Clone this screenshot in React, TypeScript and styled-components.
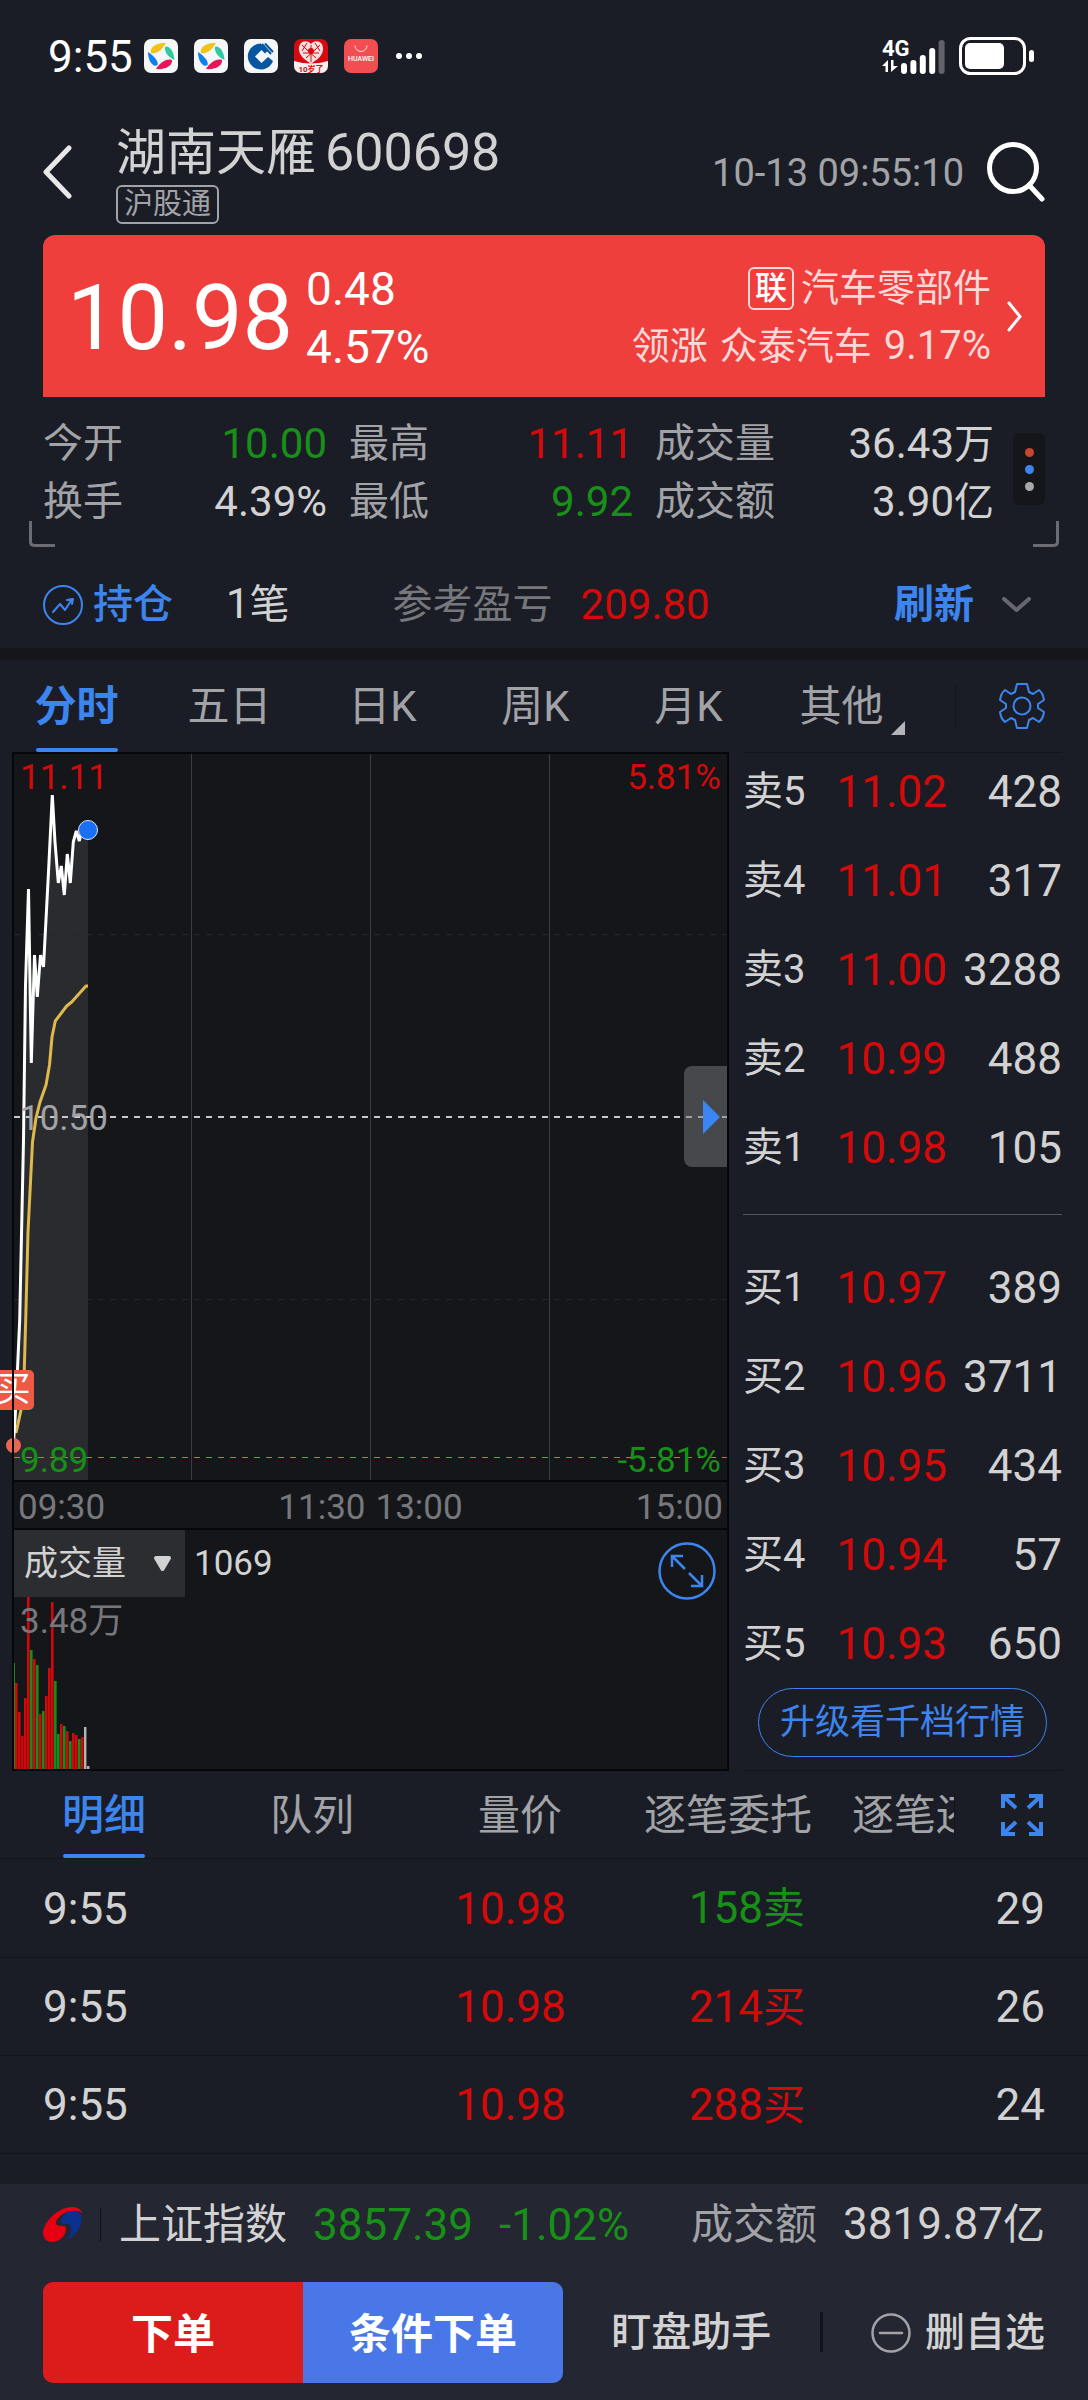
import React from "react";
import styled, { createGlobalStyle, css } from "styled-components";

const c = {
  page: "#1b1d26",
  panel: "#15161a",
  line: "#14151b",
  frame: "#06070b",
  text: "#d2d2d2",
  muted: "#a2a3a6",
  dim: "#77787b",
  blue: "#3d85ee",
  red: "#d40a0a",
  green: "#189018",
};

const Global = createGlobalStyle`
  * { box-sizing: border-box; }
  body {
    margin: 0;
    background: ${c.page};
    color: ${c.text};
    font-family: Roboto, "Noto Sans CJK SC", sans-serif;
    overflow-x: hidden;
  }
  button, select { font: inherit; color: inherit; background: none; border: 0; padding: 0; margin: 0; cursor: pointer; }
  h1, p, dl, dt, dd { margin: 0; font-weight: 400; }
  svg { display: block; flex: none; }
`;

type Tone = "text" | "muted" | "dim" | "blue" | "red" | "green";

const Page = styled.main`
  background: ${c.page};
  overflow: hidden;
`;

const Num = styled.span<{ $tone?: Tone; $large?: boolean }>`
  font-size: ${(p) => (p.$large ? 44 : 42)}px;
  line-height: 58px;
  white-space: nowrap;
  color: ${(p) => c[p.$tone ?? "text"]};
`;

const Unit = styled.span`
  font-size: 40px;
`;

const Large = styled.span`
  font-size: 42px;
`;

const Label = styled.span<{ $tone?: Tone; $bold?: boolean }>`
  font-size: 40px;
  line-height: 58px;
  white-space: nowrap;
  font-weight: ${(p) => (p.$bold ? 500 : 400)};
  color: ${(p) => c[p.$tone ?? "muted"]};
`;

/* ---------- status bar ---------- */

const StatusBar = styled.header`
  height: 112px;
  padding: 0 54px 0 48px;
  display: flex;
  align-items: center;
  justify-content: space-between;
`;

const StatusGroup = styled.div<{ $gap: number }>`
  display: flex;
  align-items: center;
  gap: ${(p) => p.$gap}px;
`;

const Clock = styled.span`
  font-size: 44px;
  line-height: 52px;
  padding-top: 2px;
  color: #fff;
  width: 80px;
`;

const PetalApp = () => (
  <svg width="34" height="34" viewBox="0 0 34 34" aria-hidden="true">
    <rect width="34" height="34" rx="7" fill="#f5f6f8" />
    <path d="M7 14C5 9 12 3 22 4C19 9 15 14 9 14.500Z" fill="#efc417" />
    <path d="M21 8C24 6 30 11 30.500 21C25 19 20 13 21 8Z" fill="#2fcaa0" />
    <path d="M28 21C29 26 22 31 12 30C15 25 22 19 28 21Z" fill="#ea1558" />
    <path d="M4 13C9 16 15 22 13.500 26C9 29 4 22 4 13Z" fill="#0d80f0" />
  </svg>
);

const BankApp = () => (
  <svg width="34" height="34" viewBox="0 0 34 34" aria-hidden="true">
    <rect width="34" height="34" rx="7" fill="#f5f6f8" />
    <path d="M17 4.500A13 13 0 1 0 29 22L24 18L17.500 24L11 17.500L17.500 11L21 14.500L24 11.500L17 5Z" fill="#0657a0" />
    <path d="M18 5L27 15M21 4.500L29 13" stroke="#0657a0" strokeWidth="2" />
  </svg>
);

const HeartApp = () => (
  <svg width="34" height="34" viewBox="0 0 34 34" aria-hidden="true">
    <rect width="34" height="34" rx="7" fill="#d70a12" />
    <path d="M0 22Q17 27 34 22V27A7 7 0 0 1 27 34H7A7 7 0 0 1 0 27Z" fill="#f7eeee" />
    <path d="M17 5C13 0 4 2 5 11C6 18 12 21 17 25C22 21 28 18 29 11C30 2 21 0 17 5Z" fill="#f7dede" />
    <path d="M8 6l5 5M13 4l-5 8M26 6l-5 5M21 4l5 8M17 6v17M9 14h16M12 19l10-9M22 19l-10-9" stroke="#d70a12" strokeWidth="1" />
    <circle cx="17" cy="12" r="3" fill="#d70a12" />
    <text x="17" y="33" textAnchor="middle" fontSize="8" fontWeight="700" fill="#d70a12">10岁了</text>
  </svg>
);

const StoreApp = () => (
  <svg width="34" height="34" viewBox="0 0 34 34" aria-hidden="true">
    <rect width="34" height="34" rx="7" fill="#f24e52" />
    <path d="M11 6.500A6 6 0 0 0 23 6.500" fill="none" stroke="#fde3e3" strokeWidth="1" />
    <text x="17" y="22" textAnchor="middle" fontSize="7" fontWeight="500" fill="#fff">HUAWEI</text>
  </svg>
);

const More = () => (
  <svg width="28" height="8" viewBox="0 0 28 8" fill="#fff" aria-hidden="true">
    <circle cx="5" cy="4" r="3" />
    <circle cx="15" cy="4" r="3" />
    <circle cx="25" cy="4" r="3" />
  </svg>
);

const Network = styled.div`
  display: flex;
  align-items: flex-end;
`;

const NetworkKind = styled.div`
  width: 19px;
  height: 36px;
  color: #fff;
  font-size: 22px;
  font-weight: 700;
  line-height: 22px;
  white-space: nowrap;
`;

const bars = [11, 14, 19, 26, 34];

const Signal = () => (
  <Network>
    <NetworkKind>
      4G
      <svg width="16" height="12" viewBox="0 0 16 12" fill="#fff" aria-hidden="true">
        <path d="M6 0V12H3.500V6H0ZM9 12V0H11.500V6H16Z" />
      </svg>
    </NetworkKind>
    <svg width="44" height="34" viewBox="0 0 44 34" aria-hidden="true">
      {bars.map((h, i) => (
        <rect key={h} x={i * 9.4} y={34 - h} width="6" height={h} rx="3" fill={i === 4 ? "#62636a" : "#fff"} />
      ))}
    </svg>
  </Network>
);

const Battery = () => (
  <svg width="75" height="38" viewBox="0 0 75 38" aria-hidden="true">
    <rect x="1.500" y="1.500" width="64" height="35" rx="10" fill="none" stroke="#fff" strokeWidth="3" />
    <rect x="6" y="6" width="39" height="26" rx="5" fill="#fff" />
    <rect x="70" y="13" width="5" height="12" rx="2.500" fill="#fff" />
  </svg>
);

/* ---------- title ---------- */

const TitleBar = styled.div`
  height: 123px;
  padding: 0 43px 4px;
  display: flex;
  align-items: center;
`;

const TitleBlock = styled.div`
  margin-left: 44px;
  margin-right: auto;
  padding-top: 7px;
  display: flex;
  flex-direction: column;
  align-items: flex-start;
  gap: 5px;
`;

const Title = styled.h1`
  display: flex;
  gap: 9px;
  font-size: 50px;
  line-height: 54px;
  white-space: nowrap;
`;

const Code = styled.span`
  font-size: 52px;
`;

const MarketTag = styled.span`
  height: 39px;
  padding: 0 6px;
  border: 2px solid ${c.muted};
  border-radius: 6px;
  font-size: 29px;
  line-height: 35px;
  color: ${c.muted};
`;

const Stamp = styled.time`
  font-size: 38px;
  line-height: 44px;
  padding-top: 3px;
  color: ${c.muted};
  margin-right: 22px;
  white-space: nowrap;
`;

/* ---------- quote card ---------- */

const Quote = styled.section`
  margin: 0 43px;
  height: 162px;
  padding: 0 23px 0 24px;
  display: flex;
  align-items: center;
  background: #ee3f3d;
  border-radius: 12px 12px 0 0;
  color: #fff;
`;

const Price = styled.strong`
  padding-top: 6px;
  font-size: 90px;
  line-height: 100px;
  font-weight: 400;
`;

const Change = styled.div`
  margin-left: 13px;
  padding-top: 3px;
  display: flex;
  flex-direction: column;
  font-size: 46px;
  line-height: 58px;
`;

const Sector = styled.button`
  margin-left: auto;
  display: flex;
  align-items: center;
  gap: 16px;
  text-align: right;
`;

const SectorText = styled.span`
  padding-top: 2px;
  display: flex;
  flex-direction: column;
  align-items: flex-end;
  font-size: 38px;
  line-height: 58px;
  color: #fcd9d8;
  white-space: nowrap;
`;

const SectorLine = styled.span<{ $gap: number }>`
  display: flex;
  align-items: center;
  gap: ${(p) => p.$gap}px;
`;

const LeaderChange = styled.span`
  font-size: 40px;
`;

const LinkTag = styled.span`
  width: 46px;
  height: 43px;
  border: 2px solid #fcd9d8;
  border-radius: 6px;
  font-size: 32px;
  line-height: 38px;
  font-weight: 500;
  text-align: center;
  color: #fff;
`;

/* ---------- stats ---------- */

const Stats = styled.section`
  position: relative;
  height: 151px;
  padding: 18px 43px 0;
  display: flex;
  gap: 19px;
`;

const StatGrid = styled.dl`
  flex: 1;
  display: grid;
  grid-template-columns: 284fr 284fr 339fr;
  grid-auto-rows: 58px;
  column-gap: 22px;
`;

const Stat = styled.div`
  display: flex;
  justify-content: space-between;
`;

const DotsButton = styled.button`
  width: 32px;
  height: 72px;
  margin-top: 18px;
  border-radius: 6px;
  background: ${c.panel};
  display: flex;
  flex-direction: column;
  align-items: center;
  justify-content: center;
  gap: 8px;
`;

const Dot = styled.span<{ $color: string }>`
  width: 9px;
  height: 9px;
  border-radius: 50%;
  background: ${(p) => p.$color};
`;

const Corner = styled.span<{ $side: "left" | "right" }>`
  position: absolute;
  bottom: 1px;
  ${(p) => p.$side}: 29px;
  width: 26px;
  height: 26px;
  border-bottom: 3px solid #6c6d72;
  ${(p) => css`border-${p.$side}: 3px solid #6c6d72;`}
  ${(p) => (p.$side === "left" ? "border-bottom-left-radius: 5px;" : "border-bottom-right-radius: 5px;")}
`;

/* ---------- holding ---------- */

const Holding = styled.section`
  height: 100px;
  padding: 13px 57px 0 43px;
  display: flex;
  align-items: center;
  gap: 28px;
`;

const HoldingButton = styled.button`
  display: flex;
  align-items: center;
  gap: 10px;
  margin-right: 25px;
`;

const HoldingCount = styled(Num)`
  margin-right: 75px;
`;

const Refresh = styled.button`
  margin-left: auto;
  font-size: 40px;
  line-height: 58px;
  font-weight: 700;
  color: ${c.blue};
`;

const Band = styled.div`
  height: 12px;
  background: ${c.panel};
`;

/* ---------- tabs ---------- */

const ChartTabs = styled.nav`
  height: 92px;
  display: grid;
  grid-template-columns: 918fr 170fr;
`;

const TabGroup = styled.div`
  display: flex;
  overflow: hidden;
`;

const Tab = styled.button<{ $active?: boolean; $width?: number; $bold?: boolean }>`
  position: relative;
  flex: ${(p) => (p.$width ? `0 0 ${p.$width}px` : "1 1 0")};
  padding-top: 2px;
  font-size: 42px;
  line-height: 56px;
  white-space: nowrap;
  font-weight: ${(p) => (p.$bold ? 700 : p.$active ? 500 : 400)};
  color: ${(p) => (p.$active ? c.blue : c.muted)};
  ${(p) =>
    p.$active &&
    css`
      &::after {
        content: "";
        position: absolute;
        left: 50%;
        bottom: 0;
        width: 82px;
        height: 4px;
        margin-left: -41px;
        border-radius: 2px;
        background: ${c.blue};
      }
    `}
`;

const TabMark = styled.svg`
  position: absolute;
  right: 13px;
  bottom: 17px;
`;

const TabTools = styled.div`
  display: flex;
  align-items: center;
  justify-content: space-between;
  padding: 0 42px 0 37px;
`;

const ToolDivider = styled.span<{ $height: number; $width?: number }>`
  flex: none;
  width: ${(p) => p.$width ?? 1}px;
  height: ${(p) => p.$height}px;
  background: ${c.line};
`;

/* ---------- chart ---------- */

const Market = styled.section`
  display: grid;
  grid-template-columns: minmax(0, 1fr) 319px;
  column-gap: 14px;
  padding: 0 26px 0 12px;
`;

const ChartColumn = styled.div`
  background: ${c.panel};
  min-width: 0;
`;

const Framed = styled.div<{ $height: number }>`
  position: relative;
  height: ${(p) => p.$height}px;
  &::after {
    content: "";
    position: absolute;
    inset: 0;
    border: 2px solid ${c.frame};
    z-index: 2;
    pointer-events: none;
  }
`;

const Plot = styled.svg`
  width: 100%;
  height: 100%;
`;

const AxisLabel = styled.span<{ $tone: Tone; $top: number; $side?: "left" | "right" }>`
  position: absolute;
  top: ${(p) => p.$top}px;
  ${(p) => p.$side ?? "left"}: 8px;
  font-size: 35px;
  line-height: 42px;
  white-space: nowrap;
  color: ${(p) => c[p.$tone]};
`;

const BuyMark = styled.span`
  position: absolute;
  left: -19px;
  top: 618px;
  width: 41px;
  height: 40px;
  border-radius: 5px;
  background: #ee5a45;
  color: #fff;
  font-size: 34px;
  line-height: 38px;
  text-align: center;
`;

const BuyPoint = styled.span`
  position: absolute;
  left: -6px;
  top: 686px;
  width: 15px;
  height: 15px;
  border-radius: 50%;
  background: #e86654;
`;

const Drawer = styled.button`
  position: absolute;
  right: 1px;
  top: 314px;
  width: 44px;
  height: 101px;
  border-radius: 8px 0 0 8px;
  background: rgba(120, 121, 124, 0.5);
  display: flex;
  align-items: center;
  justify-content: flex-end;
  padding-right: 8px;
`;

const TimeAxis = styled.div`
  height: 46px;
  padding: 2px 4px 0;
  border: solid ${c.frame};
  border-width: 0 2px;
  display: grid;
  grid-template-columns: 1fr auto auto 1fr;
  column-gap: 10px;
  font-size: 35px;
  line-height: 48px;
  color: ${c.dim};
  & > :last-child { text-align: right; }
`;

const VolumeBar = styled.div`
  position: absolute;
  left: 2px;
  top: 2px;
  right: 13px;
  display: flex;
  align-items: flex-start;
`;

const SelectBox = styled.label`
  display: flex;
  align-items: center;
  width: 171px;
  height: 67px;
  background: #2c2d31;
  padding-right: 13px;
`;

const Select = styled.select`
  flex: 1;
  min-width: 0;
  height: 67px;
  padding-left: 10px;
  appearance: none;
  font-size: 34px;
  line-height: 67px;
`;

const VolumeValue = styled.span`
  margin-left: 9px;
  font-size: 35px;
  line-height: 68px;
`;

const ExpandButton = styled.button`
  margin: 12px 0 0 auto;
`;

const volumes: Array<[string, number]> = [
  ["r", 86], ["r", 57], ["r", 33], ["r", 71], ["r", 172], ["g", 119], ["r", 110], ["g", 104],
  ["r", 55], ["g", 58], ["r", 73], ["r", 101], ["r", 167], ["g", 88], ["g", 35], ["r", 45],
  ["g", 43], ["r", 38], ["g", 28], ["r", 36], ["r", 34], ["g", 30], ["r", 32], ["w", 42], ["w", 3],
];
const volumeFill: Record<string, [string, string]> = {
  r: ["#8f0a0c", "#cf0a0a"],
  g: ["#14601a", "#178c1a"],
  w: ["#55565a", "#b4b4b6"],
};

const priceLine =
  "1.500,690 3,668 5.500,617 7.700,568 11.500,388 13.500,233 16.500,137 19.300,311 22.500,203 25.300,245 28.500,203 31.500,215 36.500,120 40.300,43 43,90 46.300,131 49.300,114 52.300,143 55.300,102 58.300,131 61.300,90 64.300,79 67.300,89 70,78 76,78";
const averageLine =
  "4,681 9,658 12.300,617 13.700,568 16,480 20.500,390 24,366 28,350 34,333 37.500,313 40,285 43.300,269 54.700,254 59.700,250 74,234 76,234";

/* ---------- order book ---------- */

const Book = styled.aside`
  height: 1019px;
  padding-top: 17px;
  border-top: 1px solid ${c.line};
  border-bottom: 1px solid ${c.line};
`;

const BookTable = styled.table`
  display: block;
`;

const BookBody = styled.tbody`
  display: grid;
  row-gap: 45px;
`;

const BookRow = styled.tr`
  display: grid;
  grid-template-columns: 70px 134px 1fr;
  height: 44px;
`;

const BookCell = styled.td<{ $tone?: Tone }>`
  padding: 0;
  font-size: 44px;
  line-height: 44px;
  text-align: right;
  color: ${(p) => c[p.$tone ?? "text"]};
`;

const BookHead = styled.th`
  padding: 0;
  font-size: 40px;
  line-height: 44px;
  font-weight: 400;
  text-align: left;
  white-space: nowrap;
`;

const BookRule = styled.hr`
  height: 1px;
  margin: 44px 0 51px;
  border: 0;
  background: #55565c;
`;

const Upgrade = styled.button`
  display: block;
  width: 289px;
  height: 69px;
  margin: 22px auto 0;
  border: 1px solid ${c.blue};
  border-radius: 35px;
  font-size: 35px;
  line-height: 66px;
  color: ${c.blue};
`;

const asks = [["卖5", "11.02", "428"], ["卖4", "11.01", "317"], ["卖3", "11.00", "3288"], ["卖2", "10.99", "488"], ["卖1", "10.98", "105"]];
const bids = [["买1", "10.97", "389"], ["买2", "10.96", "3711"], ["买3", "10.95", "434"], ["买4", "10.94", "57"], ["买5", "10.93", "650"]];

const Orders = ({ rows, label }: { rows: string[][]; label: string }) => (
  <BookTable aria-label={label}>
    <BookBody>
      {rows.map(([name, price, size]) => (
        <BookRow key={name}>
          <BookHead scope="row">{name}</BookHead>
          <BookCell $tone="red">{price}</BookCell>
          <BookCell>{size}</BookCell>
        </BookRow>
      ))}
    </BookBody>
  </BookTable>
);

/* ---------- trades ---------- */

const TradeTabs = styled.nav`
  height: 88px;
  border-bottom: 1px solid ${c.line};
  display: flex;
  align-items: stretch;
  & > ${TabGroup} { flex: 1; }
`;

const TradeTools = styled.div`
  display: flex;
  align-items: center;
  gap: 46px;
  padding-right: 45px;
`;

const Trades = styled.table`
  width: 100%;
  table-layout: fixed;
  border-collapse: collapse;
  margin-bottom: 30px;
`;

const TradeRow = styled.tr`
  height: 98px;
  border-bottom: 1px solid ${c.line};
`;

const TradeCell = styled.td<{ $tone?: Tone; $width: string }>`
  width: ${(p) => p.$width};
  padding: 2px 0 0;
  font-size: 44px;
  line-height: 58px;
  text-align: right;
  white-space: nowrap;
  color: ${(p) => c[p.$tone ?? "text"]};
  &:first-child { text-align: left; padding-left: 43px; }
  &:last-child { padding-right: 43px; }
`;

const trades: Array<[string, string, string, string, Tone, string]> = [
  ["9:55", "10.98", "158", "卖", "green", "29"],
  ["9:55", "10.98", "214", "买", "red", "26"],
  ["9:55", "10.98", "288", "买", "red", "24"],
];

/* ---------- footer ---------- */

const Footer = styled.footer`
  background: #242631;
  padding: 0 43px 18px;
`;

const IndexRow = styled.div`
  height: 82px;
  display: flex;
  align-items: center;
  & > ${ToolDivider} { margin: 0 18px; }
`;

const IndexName = styled.span<{ $tone?: Tone; $push?: boolean }>`
  font-size: 42px;
  line-height: 58px;
  white-space: nowrap;
  margin-right: 26px;
  margin-left: ${(p) => (p.$push ? "auto" : "0")};
  color: ${(p) => c[p.$tone ?? "text"]};
`;

const IndexValue = styled(Num)`
  margin-right: 26px;
`;

const Actions = styled.div`
  margin-top: 16px;
  display: flex;
  align-items: center;
  justify-content: space-between;
`;

const TradeButtons = styled.div`
  display: flex;
  border-radius: 10px;
  overflow: hidden;
`;

const TradeButton = styled.button<{ $color: string }>`
  width: 260px;
  height: 101px;
  padding-bottom: 4px;
  background: ${(p) => p.$color};
  color: #fff;
  font-size: 42px;
  font-weight: 700;
`;

const TextButton = styled.button`
  display: flex;
  align-items: center;
  gap: 14px;
  padding-top: 2px;
  font-size: 40px;
  line-height: 58px;
  font-weight: 500;
  white-space: nowrap;
`;

export default function App() {
  return (
    <>
      <Global />
      <Page>
        <StatusBar>
          <StatusGroup $gap={16}>
            <Clock>9:55</Clock>
            <PetalApp />
            <PetalApp />
            <BankApp />
            <HeartApp />
            <StoreApp />
            <More />
          </StatusGroup>
          <StatusGroup $gap={14}>
            <Signal />
            <Battery />
          </StatusGroup>
        </StatusBar>

        <TitleBar>
          <button aria-label="返回">
            <svg width="29" height="54" viewBox="0 0 29 54" fill="none" stroke="#e8e8e8" strokeWidth="5" strokeLinecap="round" strokeLinejoin="round">
              <path d="M26 3L3 27L26 51" />
            </svg>
          </button>
          <TitleBlock>
            <Title>湖南天雁<Code>600698</Code></Title>
            <MarketTag>沪股通</MarketTag>
          </TitleBlock>
          <Stamp>10-13 09:55:10</Stamp>
          <button aria-label="搜索">
            <svg width="59" height="60" viewBox="0 0 59 60" fill="none" stroke="#fff" strokeWidth="5" strokeLinecap="round">
              <circle cx="27" cy="26" r="23.500" />
              <path d="M43 43L56 57" />
            </svg>
          </button>
        </TitleBar>

        <Quote>
          <Price>10.98</Price>
          <Change>
            <span>0.48</span>
            <span>4.57%</span>
          </Change>
          <Sector>
            <SectorText>
              <SectorLine $gap={7}><LinkTag>联</LinkTag>汽车零部件</SectorLine>
              <SectorLine $gap={12}>
                <span>领涨</span>
                <span>众泰汽车</span>
                <LeaderChange>9.17%</LeaderChange>
              </SectorLine>
            </SectorText>
            <svg width="15" height="31" viewBox="0 0 15 31" fill="none" stroke="#fff" strokeWidth="3" strokeLinecap="round">
              <path d="M2 2L13 15.500L2 29" />
            </svg>
          </Sector>
        </Quote>

        <Stats>
          <StatGrid>
            <Stat><Label as="dt">今开</Label><Num as="dd" $tone="green">10.00</Num></Stat>
            <Stat><Label as="dt">最高</Label><Num as="dd" $tone="red">11.11</Num></Stat>
            <Stat><Label as="dt">成交量</Label><Num as="dd">36.43<Unit>万</Unit></Num></Stat>
            <Stat><Label as="dt">换手</Label><Num as="dd">4.39%</Num></Stat>
            <Stat><Label as="dt">最低</Label><Num as="dd" $tone="green">9.92</Num></Stat>
            <Stat><Label as="dt">成交额</Label><Num as="dd">3.90<Unit>亿</Unit></Num></Stat>
          </StatGrid>
          <DotsButton aria-label="更多指标">
            <Dot $color="#c8452f" />
            <Dot $color="#3d85ee" />
            <Dot $color="#a9a9ab" />
          </DotsButton>
          <Corner $side="left" />
          <Corner $side="right" />
        </Stats>

        <Holding>
          <HoldingButton>
            <svg width="40" height="40" viewBox="0 0 40 40" fill="none" stroke={c.blue} strokeWidth="2" strokeLinecap="round" strokeLinejoin="round">
              <circle cx="20" cy="20" r="19" />
              <path d="M10 27L17 19L22 25L29 14M24 15L30 14L29 19" />
            </svg>
            <Label $tone="blue" $bold>持仓</Label>
          </HoldingButton>
          <HoldingCount>1<Unit>笔</Unit></HoldingCount>
          <Label $tone="dim">参考盈亏</Label>
          <Num $tone="red">209.80</Num>
          <Refresh>刷新</Refresh>
          <button aria-label="展开">
            <svg width="29" height="16" viewBox="0 0 29 16" fill="none" stroke="#67686d" strokeWidth="4" strokeLinecap="round" strokeLinejoin="round">
              <path d="M2 2L14.500 13L27 2" />
            </svg>
          </button>
        </Holding>
        <Band />

        <ChartTabs>
          <TabGroup>
            <Tab $active $bold>分时</Tab>
            <Tab>五日</Tab>
            <Tab>日K</Tab>
            <Tab>周K</Tab>
            <Tab>月K</Tab>
            <Tab>
              其他
              <TabMark width="14" height="14" viewBox="0 0 14 14" aria-hidden="true"><path d="M14 0V14H0Z" fill="#b4b5b7" /></TabMark>
            </Tab>
          </TabGroup>
          <TabTools>
            <ToolDivider $height={43} />
            <button aria-label="设置">
              <svg width="48" height="48" viewBox="-24 -24 48 48" fill="none" stroke={c.blue} strokeWidth="2" strokeLinejoin="round">
                <path d="M-5 -22H5L7 -14L11 -12L17 -16Q21 -13 22 -6L16 -2V2L22 6Q21 13 17 16L11 12L7 14L5 22H-5L-7 14L-11 12L-17 16Q-21 13 -22 6L-16 2V-2L-22 -6Q-21 -13 -17 -16L-11 -12L-7 -14Z" />
                <circle r="8.500" />
              </svg>
            </button>
          </TabTools>
        </ChartTabs>

        <Market>
          <ChartColumn>
            <Framed $height={730}>
              <Plot viewBox="0 0 717 730" preserveAspectRatio="none" aria-label="分时走势">
                <polygon points={`${priceLine} 76,730 1.500,730`} fill="#2a2b2f" />
                <path d="M179.500 0V730M358.500 0V730M537.500 0V730" stroke="#3c3d44" strokeWidth="1" />
                <path d="M2 182.500H715M2 547.500H715" stroke="#26272c" strokeWidth="1" strokeDasharray="6 6" />
                <path d="M2 365H715" stroke="#c9c9cb" strokeWidth="2" strokeDasharray="6 6" />
                <path d="M2 705.500H715" stroke="#dc6454" strokeWidth="1" strokeDasharray="6 6" />
                <polyline points={averageLine} fill="none" stroke="#dfb94e" strokeWidth="3" strokeLinejoin="round" />
                <polyline points={priceLine} fill="none" stroke="#fff" strokeWidth="3" strokeLinejoin="bevel" />
                <circle cx="76" cy="78" r="9.500" fill="#1a6ff5" stroke="#d5e6ff" strokeWidth="1" />
              </Plot>
              <AxisLabel $tone="red" $top={5}>11.11</AxisLabel>
              <AxisLabel $tone="red" $top={5} $side="right">5.81%</AxisLabel>
              <AxisLabel $tone="muted" $top={346}>10.50</AxisLabel>
              <AxisLabel $tone="green" $top={688}>9.89</AxisLabel>
              <AxisLabel $tone="green" $top={688} $side="right">-5.81%</AxisLabel>
              <BuyMark>买</BuyMark>
              <BuyPoint />
              <Drawer aria-label="收起盘口">
                <svg width="17" height="34" viewBox="0 0 17 34" aria-hidden="true"><path d="M0 0L17 17L0 34Z" fill="#3a86f5" /></svg>
              </Drawer>
            </Framed>
            <TimeAxis>
              <span>09:30</span>
              <span>11:30</span>
              <span>13:00</span>
              <span>15:00</span>
            </TimeAxis>
            <Framed $height={243}>
              <Plot viewBox="0 0 717 243" preserveAspectRatio="xMinYMax meet" aria-label="成交量柱状图">
                <rect x="2" y="135" width="1" height="106" fill="#178c1a" />
                {volumes.map(([kind, h], i) => (
                  <g key={i}>
                    <rect x={3 + i * 3} y={241 - h} width="3" height={h} fill={volumeFill[kind][0]} />
                    <rect x={3 + i * 3} y={241 - h} width="2" height={h} fill={volumeFill[kind][1]} />
                  </g>
                ))}
              </Plot>
              <AxisLabel $tone="dim" $top={73}>3.48万</AxisLabel>
              <VolumeBar>
                <SelectBox>
                  <Select aria-label="指标" defaultValue="vol">
                    <option value="vol">成交量</option>
                  </Select>
                  <svg width="19" height="16" viewBox="0 0 19 16" aria-hidden="true">
                    <path d="M3 2H16L9.500 13Z" fill="#d2d2d2" stroke="#d2d2d2" strokeWidth="4" strokeLinejoin="round" />
                  </svg>
                </SelectBox>
                <VolumeValue>1069</VolumeValue>
                <ExpandButton aria-label="放大">
                  <svg width="58" height="58" viewBox="0 0 58 58" fill="none" stroke={c.blue} strokeWidth="2.500">
                    <circle cx="29" cy="29" r="27.500" />
                    <path d="M27 27L15 15M14 25V14H25M31 31L43 43M44 33V44H33" />
                  </svg>
                </ExpandButton>
              </VolumeBar>
            </Framed>
          </ChartColumn>

          <Book>
            <Orders rows={asks} label="卖盘" />
            <BookRule />
            <Orders rows={bids} label="买盘" />
            <Upgrade>升级看千档行情</Upgrade>
          </Book>
        </Market>

        <TradeTabs>
          <TabGroup>
            <Tab $active $width={208}>明细</Tab>
            <Tab $width={208}>队列</Tab>
            <Tab $width={208}>量价</Tab>
            <Tab $width={208}>逐笔委托</Tab>
            <Tab $width={208}>逐笔还原</Tab>
          </TabGroup>
          <TradeTools>
            <ToolDivider $height={43} />
            <button aria-label="全屏">
              <svg width="42" height="42" viewBox="0 0 42 42" fill="none" stroke={c.blue} strokeWidth="4">
                <path d="M2 14V2H14M2 2L15 14M28 2H40V14M40 2L27 14M2 28V40H14M2 40L15 28M28 40H40V28M40 40L27 28" />
              </svg>
            </button>
          </TradeTools>
        </TradeTabs>

        <Trades aria-label="成交明细">
          <tbody>
            {trades.map(([time, price, size, side, tone, count]) => (
              <TradeRow key={size}>
                <TradeCell $width="28%">{time}</TradeCell>
                <TradeCell $width="24%" $tone="red">{price}</TradeCell>
                <TradeCell $width="22%" $tone={tone}>{size}<Large>{side}</Large></TradeCell>
                <TradeCell $width="26%">{count}</TradeCell>
              </TradeRow>
            ))}
          </tbody>
        </Trades>

        <Footer>
          <IndexRow>
            <svg width="39" height="35" viewBox="0 0 39 35" aria-hidden="true">
              <path d="M0 25C2 12 17 0 29 0C34 0 38 2 39 6C34 3 26 3 20 7C14 11 11 16 14 18C17 20 23 17 23 22C23 28 17 35 9 35C3 35 0 31 0 25Z" fill="#e60012" />
              <path d="M18 15C18 8 26 3 33 4C43 7 39 26 24 33C29 26 30 19 25 17C21 16 18 18 18 15Z" fill="#0a318f" />
            </svg>
            <ToolDivider $height={34} />
            <IndexName>上证指数</IndexName>
            <IndexValue $large $tone="green">3857.39</IndexValue>
            <IndexValue $large $tone="green">-1.02%</IndexValue>
            <IndexName $tone="muted" $push>成交额</IndexName>
            <Num $large>3819.87<Large>亿</Large></Num>
          </IndexRow>
          <Actions>
            <TradeButtons>
              <TradeButton $color="#dc1b1b">下单</TradeButton>
              <TradeButton $color="#4a77e8">条件下单</TradeButton>
            </TradeButtons>
            <TextButton>盯盘助手</TextButton>
            <ToolDivider $height={40} $width={3} />
            <TextButton>
              <svg width="40" height="40" viewBox="0 0 40 40" fill="none" stroke={c.muted} strokeWidth="2.500" strokeLinecap="round" aria-hidden="true">
                <circle cx="20" cy="20" r="18.500" />
                <path d="M9 20H31" />
              </svg>
              删自选
            </TextButton>
          </Actions>
        </Footer>
      </Page>
    </>
  );
}
